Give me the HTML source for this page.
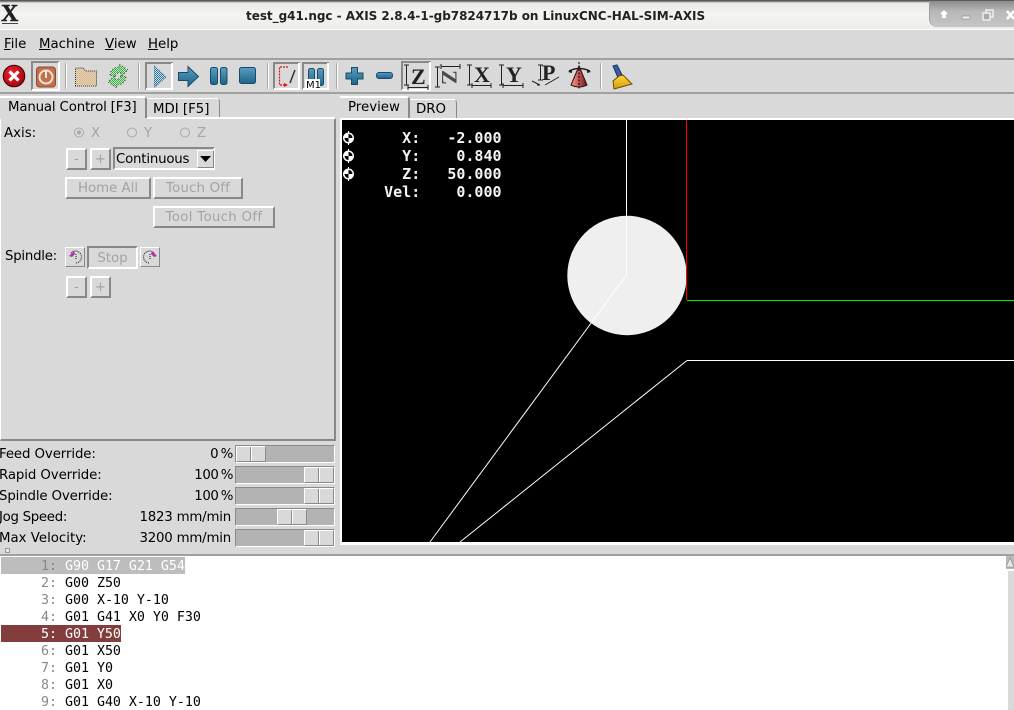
<!DOCTYPE html>
<html>
<head>
<meta charset="utf-8">
<style>
html,body{margin:0;padding:0;width:1014px;height:710px;overflow:hidden;background:#d9d9d9}
body{position:relative;font-family:"DejaVu Sans",sans-serif;font-size:13.33px;color:#000}
.a{position:absolute;box-sizing:border-box}
.t{position:absolute;white-space:nowrap;line-height:16px;height:16px}
.up{position:absolute;box-sizing:border-box;background:#d9d9d9;border:2px solid;border-color:#fff #888 #888 #fff;text-align:center;color:#a3a3a3;white-space:nowrap;line-height:20px}
.dn{position:absolute;box-sizing:border-box;background:#d9d9d9;border:2px solid;border-color:#888 #fff #fff #888;text-align:center;color:#a3a3a3;white-space:nowrap;line-height:21px}
.dis{color:#a3a3a3}
.tr{position:absolute;box-sizing:border-box;left:235px;width:100px;height:18px;background:#b3b3b3;border:1px solid;border-color:#8a8a8a #fff #fff #8a8a8a}
.th{position:absolute;top:0;height:16px;width:30px;background:#d9d9d9;border:1px solid;border-color:#fff #8a8a8a #8a8a8a #fff;box-sizing:border-box}
.th:after{content:"";position:absolute;left:13px;top:0;height:14px;width:1px;background:#8a8a8a;box-shadow:1px 0 0 #fff}
.c{position:absolute;left:1px;font-family:"DejaVu Sans Mono",monospace;font-size:13.33px;line-height:19px;height:17px;white-space:pre;width:1004px;color:#000;letter-spacing:-.03px}
.n{color:#888}
.dro{position:absolute;left:348px;font-family:"DejaVu Sans Mono",monospace;font-weight:bold;font-size:15px;line-height:18px;height:18px;white-space:pre;color:#f4f4f4}
svg{position:absolute;overflow:visible}
</style>
</head>
<body>
<!-- title bar -->
<div class="a" style="left:0;top:0;width:1014px;height:30px;background:linear-gradient(#5a5a5a 0,#5a5a5a 1px,#b0b0b0 2px,#e8e8e6 3px,#f4f4f2 14px,#ececea 29px,#fff 29px)"></div>
<div class="a" style="left:929px;top:1px;width:85px;height:26px;background:linear-gradient(#8c8c8c,#b8b8b8 40%,#c6c6c6);border-bottom-left-radius:8px;border-left:1px solid #a0a0a0"></div>
<div class="t" style="left:1px;top:-1px;font-family:'Liberation Serif',serif;font-weight:bold;font-size:24px;line-height:30px;height:30px;color:#222;-webkit-text-stroke:.5px #222">X</div>
<div class="a" style="left:2px;top:23px;width:16px;height:1px;background:#444"></div>
<div class="t" style="left:246px;top:8px;font-weight:bold;font-size:12px;color:#222;letter-spacing:-.03px">test_g41.ngc - AXIS 2.8.4-1-gb7824717b on LinuxCNC-HAL-SIM-AXIS</div>
<svg style="left:929px;top:0" width="85" height="29">
<path d="M11 14l4-4 4 4h-2v4h-4v-4z" fill="#fff"/>
<rect x="33" y="16" width="8" height="3" fill="#eee" stroke="#777" stroke-width=".5"/>
<rect x="57" y="10" width="7" height="7" fill="none" stroke="#eee" stroke-width="1.5"/>
<rect x="54" y="13" width="7" height="7" fill="#aaa" stroke="#eee" stroke-width="1.5"/>
<path d="M78 11l7 8M85 11l-7 8" stroke="#fff" stroke-width="2.5"/>
</svg>
<!-- menu -->
<div class="t" style="left:4px;top:37px"><u>F</u>ile</div>
<div class="t" style="left:39px;top:37px"><u>M</u>achine</div>
<div class="t" style="left:105px;top:37px"><u>V</u>iew</div>
<div class="t" style="left:148px;top:37px"><u>H</u>elp</div>
<div class="a" style="left:0;top:58px;width:1014px;height:2px;background:#a0a0a0"></div>
<!-- toolbar -->
<svg style="left:0;top:60px" width="640" height="32">
<defs>
<linearGradient id="b" x1="0" y1="0" x2="0" y2="1"><stop offset="0" stop-color="#5d9dc0"/><stop offset="1" stop-color="#1b6489"/></linearGradient>
<linearGradient id="cn" x1="0" y1="0" x2="1" y2="0"><stop offset="0" stop-color="#f0a090"/><stop offset=".6" stop-color="#b84848"/><stop offset="1" stop-color="#601818"/></linearGradient>
<linearGradient id="br" x1="0" y1="0" x2="0" y2="1"><stop offset="0" stop-color="#ffd83a"/><stop offset="1" stop-color="#d79a10"/></linearGradient>
<radialGradient id="es" cx=".4" cy=".35" r=".7"><stop offset="0" stop-color="#f02030"/><stop offset="1" stop-color="#a00810"/></radialGradient>
<pattern id="d1" width="2" height="2" patternUnits="userSpaceOnUse"><rect width="2" height="2" fill="#e4d2b8"/><rect width="1" height="1" fill="#d8b88c"/><rect x="1" y="1" width="1" height="1" fill="#d8b88c"/></pattern>
<pattern id="d2" width="2" height="2" patternUnits="userSpaceOnUse"><rect width="2" height="2" fill="#d9d9d9"/><rect width="1" height="1" fill="#22c02a"/><rect x="1" y="1" width="1" height="1" fill="#22c02a"/></pattern>
<pattern id="d3" width="2" height="2" patternUnits="userSpaceOnUse"><rect width="2" height="2" fill="#d9d9d9"/><rect width="1" height="1" fill="#2878a8"/><rect x="1" y="1" width="1" height="1" fill="#2878a8"/></pattern>
</defs>
<!-- estop -->
<circle cx="14" cy="16" r="10.800" fill="url(#es)" stroke="#300" stroke-width="1"/>
<path d="M9.500 11.500l9 9M18.500 11.500l-9 9" stroke="#fff" stroke-width="3.200"/>
<!-- power -->
<path d="M32 30V2h27" fill="none" stroke="#888" stroke-width="2"/><path d="M59 2v28H32" fill="none" stroke="#fff" stroke-width="2"/>
<rect x="36.500" y="7" width="19" height="20" rx="3" fill="#c2704c" stroke="#8c4a30"/>
<circle cx="46" cy="17" r="6.500" fill="none" stroke="#f3e4da" stroke-width="2"/>
<rect x="45" y="11" width="2" height="7" fill="#f3e4da"/>
<rect x="65" y="3" width="1" height="26" fill="#a8a8a8"/><rect x="66" y="3" width="1" height="26" fill="#fff"/>
<!-- open -->
<path d="M75.500 26V8h8l2 3h11v15z" fill="url(#d1)" stroke="#333" stroke-width="1" stroke-dasharray="1 1"/>
<!-- reload -->
<path d="M110 15Q111 7 120 7L119 4 128 10 121 17 121 13Q116 12 115 17zM126 17Q125 25 116 25L117 28 108 22 115 15 115 19Q120 20 121 15z" fill="url(#d2)" stroke="#444" stroke-width="1" stroke-dasharray="1 2"/>
<rect x="138" y="3" width="1" height="26" fill="#a8a8a8"/><rect x="139" y="3" width="1" height="26" fill="#fff"/>
<!-- run -->
<path d="M146 30V3h27" fill="none" stroke="#888" stroke-width="2"/><path d="M172 3v26H146" fill="none" stroke="#fff" stroke-width="2"/>
<path d="M154.500 6.500L166 17 154.500 27.500z" fill="url(#d3)" stroke="#2878a8" stroke-dasharray="1 1"/>
<!-- step -->
<path d="M178.500 12.500H188V6.500L198.500 16.500 188 26.500V20.500H178.500z" fill="url(#b)" stroke="#174c68"/>
<!-- pause -->
<rect x="210.500" y="7.500" width="7" height="17" rx="2" fill="url(#b)" stroke="#174c68"/>
<rect x="220.500" y="7.500" width="6.500" height="17" rx="2" fill="url(#b)" stroke="#174c68"/>
<!-- stop -->
<rect x="239.500" y="7.500" width="16" height="16" rx="2" fill="url(#b)" stroke="#174c68"/>
<rect x="267" y="3" width="1" height="26" fill="#a8a8a8"/><rect x="268" y="3" width="1" height="26" fill="#fff"/>
<!-- block delete -->
<path d="M274 29V3h26" fill="none" stroke="#888" stroke-width="2"/><path d="M299 3v26H274" fill="none" stroke="#fff" stroke-width="2"/>
<path d="M288 7h-8.500v18h6" fill="none" stroke="#e01010" stroke-width="1.200" stroke-dasharray="2 1"/>
<path d="M284 23l4 2-4 2z" fill="#e01010"/>
<path d="M290 23l5-13" stroke="#333" stroke-width="1.500"/>
<!-- M1 -->
<path d="M303 29V3h26" fill="none" stroke="#888" stroke-width="2"/><path d="M328 3v26H303" fill="none" stroke="#fff" stroke-width="2"/>
<rect x="308.500" y="8.500" width="6" height="17" rx="2" fill="url(#b)" stroke="#174c68"/>
<rect x="317.500" y="8.500" width="6" height="17" rx="2" fill="url(#b)" stroke="#174c68"/>
<rect x="305" y="19" width="15" height="10" fill="#fff"/>
<text x="306" y="28" font-family="DejaVu Sans" font-size="10" fill="#000">M1</text>
<rect x="336" y="3" width="1" height="26" fill="#a8a8a8"/><rect x="337" y="3" width="1" height="26" fill="#fff"/>
<!-- plus -->
<path d="M351.500 7.500h6v5.500h5.500v6h-5.500v5.500h-6v-5.500H346v-6h5.500z" fill="url(#b)" stroke="#174c68"/>
<!-- minus -->
<rect x="376.500" y="12.500" width="16" height="6" rx="2.500" fill="url(#b)" stroke="#174c68"/>
<!-- Z view -->
<path d="M402 30V2h29" fill="none" stroke="#888" stroke-width="2"/><path d="M430 2v28H402" fill="none" stroke="#fff" stroke-width="2"/>
<g stroke="#222" fill="none">
<path d="M406.500 5v20M404 5h5M404 25h5M408 27.500h20M408 25v5M428 25v5"/>
<path d="M437.500 7v20M435 7h5M435 27h5M441 6.500h19M441 4v5M460 4v5"/>
<path d="M469.500 5v20M467 5h5M467 25h5M472 25.500h19M472 23v5M491 23v5"/>
<path d="M501.500 5v20M499 5h5M499 25h5M503 25.500h20M503 23v5M523 23v5"/>
<path d="M540.500 5v15M538 5h5M538 20h5M532 21l8 4M537 25h3M545 25l14-8"/>
</g>
<g font-family="Liberation Serif" font-weight="bold" font-size="22" fill="#222">
<text x="411" y="24">Z</text>
<text transform="translate(442,10) rotate(90)" x="0" y="0" fill="#4a4a4a">Z</text>
<text x="474" y="22">X</text>
<text x="506" y="22">Y</text>
<text x="542" y="20">P</text>
</g>
<!-- cone -->
<path d="M579 6L587 25Q579 29 571 25z" fill="url(#cn)" stroke="#301010"/>
<path d="M579 2v28" stroke="#000" stroke-dasharray="2 1.500"/>
<path d="M569 11q10-5 21 0" fill="none" stroke="#222" stroke-width="1.500"/>
<path d="M568 12l4-3v4zM591 12l-4-3v4z" fill="#222"/>
<rect x="600" y="3" width="1" height="26" fill="#a8a8a8"/><rect x="601" y="3" width="1" height="26" fill="#fff"/>
<!-- brush -->
<path d="M613 6l4-1 6 12-4 3z" fill="#3860a8" stroke="#183060"/>
<path d="M619 16l4-1 9 9-18 5-1-8z" fill="url(#br)" stroke="#6a5000"/>
</svg>
<div class="a" style="left:0;top:92px;width:1014px;height:2px;background:#a0a0a0"></div>
<!-- left tabs -->
<div class="a" style="left:0;top:96px;width:147px;height:24px;background:#d9d9d9;border-top:2px solid #fff;border-right:2px solid #888;border-top-right-radius:4px"></div>
<div class="t" style="left:8px;top:100px;letter-spacing:-.16px">Manual Control [F3]</div>
<div class="a" style="left:147px;top:98px;width:73px;height:20px;border-top:1px solid #fff;border-right:1px solid #888;border-top-right-radius:4px"></div>
<div class="t" style="left:153px;top:102px">MDI [F5]</div>
<!-- left panel -->
<div class="a" style="left:0;top:118px;width:336px;height:323px;border:2px solid;border-color:#d9d9d9 #888 #888 #fff;border-left-width:1px"></div>
<div class="a" style="left:147px;top:117px;width:188px;height:2px;background:#fff"></div>
<div class="t" style="left:4px;top:126px">Axis:</div>
<svg style="left:70px;top:126px" width="130" height="15">
<g fill="none" stroke="#a8a8a8"><circle cx="9" cy="6.500" r="4.500"/><circle cx="62" cy="6.500" r="4.500"/><circle cx="115" cy="6.500" r="4.500"/></g>
<circle cx="9" cy="6.500" r="2" fill="#a8a8a8"/>
</svg>
<div class="t dis" style="left:91px;top:126px">X</div>
<div class="t dis" style="left:144px;top:126px">Y</div>
<div class="t dis" style="left:197px;top:126px">Z</div>
<div class="up" style="left:66px;top:148px;width:21px;height:22px">-</div>
<div class="up" style="left:90px;top:148px;width:21px;height:22px">+</div>
<div class="dn" style="left:113px;top:147px;width:102px;height:23px"></div>
<div class="t" style="left:116px;top:152px;letter-spacing:-.2px">Continuous</div>
<div class="up" style="left:197px;top:150px;width:17px;height:18px;border-width:1px"></div>
<svg style="left:200px;top:156px" width="12" height="7"><path d="M0 0h11L5.500 6z" fill="#000"/></svg>
<div class="up" style="left:65px;top:177px;width:86px;height:22px">Home All</div>
<div class="up" style="left:153px;top:177px;width:90px;height:22px;letter-spacing:.2px">Touch Off</div>
<div class="up" style="left:153px;top:206px;width:122px;height:22px;letter-spacing:.3px">Tool Touch Off</div>
<div class="t" style="left:5px;top:249px;letter-spacing:-.25px">Spindle:</div>
<div class="up" style="left:65px;top:247px;width:20px;height:20px;border-width:1px"></div>
<svg style="left:68px;top:250px" width="15" height="14"><path d="M3 3a6 6 0 1 1 4 10" fill="none" stroke="#111" stroke-dasharray="1 1"/><path d="M1 6l5-5 1 3-3 3z" fill="#b030b0"/><path d="M8 4v5" stroke="#111" stroke-dasharray="1 1"/></svg>
<div class="dn" style="left:87px;top:246px;width:51px;height:23px;line-height:22px">Stop</div>
<div class="up" style="left:140px;top:247px;width:20px;height:20px;border-width:1px"></div>
<svg style="left:143px;top:250px" width="15" height="14"><path d="M11 3a6 6 0 1 0-4 10" fill="none" stroke="#111" stroke-dasharray="1 1"/><path d="M14 6L9 1 8 4l3 3z" fill="#b030b0"/><path d="M7 4v5" stroke="#111" stroke-dasharray="1 1"/></svg>
<div class="up" style="left:66px;top:276px;width:21px;height:22px">-</div>
<div class="up" style="left:90px;top:276px;width:21px;height:22px">+</div>
<!-- sliders -->
<div class="t" style="left:-1px;top:447px;letter-spacing:-.1px">Feed Override:</div>
<div class="t" style="left:-1px;top:468px;letter-spacing:-.1px">Rapid Override:</div>
<div class="t" style="left:-1px;top:489px;letter-spacing:-.14px">Spindle Override:</div>
<div class="t" style="left:-1px;top:510px;letter-spacing:-.3px">Jog Speed:</div>
<div class="t" style="left:-1px;top:531px">Max Velocity:</div>
<div class="t" style="right:781px;top:447px;letter-spacing:-.3px">0&#8201;%</div>
<div class="t" style="right:781px;top:468px;letter-spacing:-.4px">100&#8201;%</div>
<div class="t" style="right:781px;top:489px;letter-spacing:-.4px">100&#8201;%</div>
<div class="t" style="right:783px;top:510px;letter-spacing:-.2px">1823 mm/min</div>
<div class="t" style="right:783px;top:531px;letter-spacing:-.2px">3200 mm/min</div>
<div class="tr" style="top:445px"><div class="th" style="left:0"></div></div>
<div class="tr" style="top:466px"><div class="th" style="left:68px"></div></div>
<div class="tr" style="top:487px"><div class="th" style="left:68px"></div></div>
<div class="tr" style="top:508px"><div class="th" style="left:41px"></div></div>
<div class="tr" style="top:529px"><div class="th" style="left:68px"></div></div>
<!-- right tabs -->
<div class="a" style="left:340px;top:96px;width:70px;height:24px;background:#d9d9d9;border-top:2px solid #fff;border-right:2px solid #888;border-top-right-radius:4px"></div>
<div class="t" style="left:348px;top:100px">Preview</div>
<div class="a" style="left:410px;top:99px;width:47px;height:19px;border-top:1px solid #fff;border-right:1px solid #888;border-top-right-radius:4px"></div>
<div class="t" style="left:416px;top:102px">DRO</div>
<!-- preview -->
<div class="a" style="left:340px;top:118px;width:674px;height:2px;background:#fff"></div>
<div class="a" style="left:340px;top:118px;width:2px;height:427px;background:#fff"></div>
<div class="a" style="left:342px;top:120px;width:672px;height:422px;background:#000"></div>
<div class="a" style="left:340px;top:542px;width:674px;height:3px;background:#fff"></div>
<svg style="left:342px;top:120px" width="672" height="422" viewBox="342 120 672 422" shape-rendering="crispEdges">
<circle cx="627" cy="275.500" r="59.700" fill="#efefef" shape-rendering="auto"/>
<path d="M626.500 120V275" stroke="#fff"/>
<path d="M626.500 275L430 542" stroke="#fff" fill="none" shape-rendering="auto"/>
<path d="M687 360.500H1014" stroke="#fff"/>
<path d="M687 360.500L460 542" stroke="#fff" fill="none" shape-rendering="auto"/>
<path d="M686.500 120V300" stroke="#f00"/>
<path d="M687 300.500H1014" stroke="#0e0"/>
</svg>
<svg style="left:343px;top:131px" width="13" height="50">
<g><circle cx="5.500" cy="7" r="5.500" fill="#fff"/><path d="M5.500 0v14M0 7h11" stroke="#fff"/><path d="M5.500 3a4 4 0 0 1 4 4h-4zM5.500 7v4a4 4 0 0 1-4-4z" fill="#000"/></g>
<g transform="translate(0,18)"><circle cx="5.500" cy="7" r="5.500" fill="#fff"/><path d="M5.500 0v14M0 7h11" stroke="#fff"/><path d="M5.500 3a4 4 0 0 1 4 4h-4zM5.500 7v4a4 4 0 0 1-4-4z" fill="#000"/></g>
<g transform="translate(0,36)"><circle cx="5.500" cy="7" r="5.500" fill="#fff"/><path d="M5.500 0v14M0 7h11" stroke="#fff"/><path d="M5.500 3a4 4 0 0 1 4 4h-4zM5.500 7v4a4 4 0 0 1-4-4z" fill="#000"/></g>
</svg>
<div class="dro" style="top:129px">      X:   -2.000</div>
<div class="dro" style="top:147px">      Y:    0.840</div>
<div class="dro" style="top:165px">      Z:   50.000</div>
<div class="dro" style="top:183px">    Vel:    0.000</div>
<!-- divider -->
<div class="a" style="left:5px;top:548px;width:5px;height:5px;background:#e8e8e8;border:1px solid #999"></div>
<div class="a" style="left:0;top:554px;width:1014px;height:2px;background:#a0a0a0"></div>
<!-- code -->
<div class="a" style="left:0;top:556px;width:1014px;height:154px;background:#fff"></div>
<div class="a" style="left:1px;top:557px;width:184px;height:17px;background:#bdbdbd"></div>
<div class="a" style="left:1px;top:625px;width:120px;height:17px;background:#843d3d"></div>
<div class="c" style="top:557px;color:#fff"><span class="n">     1: </span>G90 G17 G21 G54</div>
<div class="c" style="top:574px"><span class="n">     2: </span>G00 Z50</div>
<div class="c" style="top:591px"><span class="n">     3: </span>G00 X-10 Y-10</div>
<div class="c" style="top:608px"><span class="n">     4: </span>G01 G41 X0 Y0 F30</div>
<div class="c" style="top:625px;color:#fff">     5: G01 Y50</div>
<div class="c" style="top:642px"><span class="n">     6: </span>G01 X50</div>
<div class="c" style="top:659px"><span class="n">     7: </span>G01 Y0</div>
<div class="c" style="top:676px"><span class="n">     8: </span>G01 X0</div>
<div class="c" style="top:693px"><span class="n">     9: </span>G01 G40 X-10 Y-10</div>
<!-- scrollbar -->
<svg style="left:1006px;top:556px" width="8" height="14"><rect width="8" height="13" fill="#b8b8b8"/><path d="M4 2L8 11H0z" fill="#e8e8e8" stroke="#777" stroke-width=".5"/></svg>
<div class="a" style="left:1008px;top:571px;width:6px;height:139px;background:#d9d9d9"></div>
</body>
</html>
